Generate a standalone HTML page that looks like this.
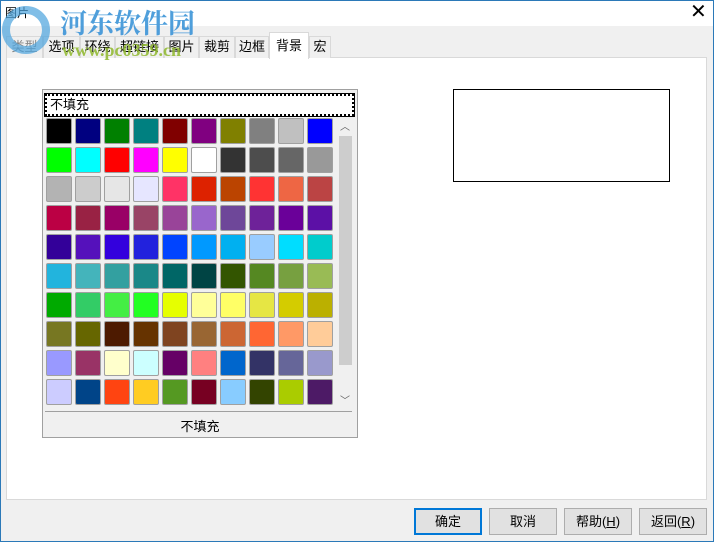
<!DOCTYPE html>
<html><head><meta charset="utf-8"><style>
*{margin:0;padding:0;box-sizing:border-box}
body{width:714px;height:542px;background:#f0f0f0;font-family:"Liberation Sans","Noto Sans CJK SC",sans-serif;font-size:12px;color:#000;position:relative;overflow:hidden}
.abs{position:absolute}
.title{left:0;top:0;width:714px;height:26px;background:#fff}
.tab{position:absolute;top:36px;height:22px;border:1px solid #d9d9d9;border-bottom:none;background:#f0f0f0;font-size:13px;line-height:20px;text-align:center}
.panel{left:6px;top:57px;width:701px;height:443px;background:#fff;border:1px solid #d9d9d9}
.sw{position:absolute;width:26px;height:26px;border:1px solid #a0a0a0;border-radius:2px}
.btn{position:absolute;top:508px;height:27px;width:68px;background:#e1e1e1;border:1px solid #adadad;font-size:13px;line-height:25px;text-align:center}
</style></head><body>
<div class="abs title"></div>
<div class="abs" style="left:5px;top:4px;font-size:12px">图片</div>
<div class="abs" style="left:690px;top:0;font-size:20px;line-height:24px">✕</div>

<div class="abs panel"></div>
<div class="tab" style="left:6px;width:37px;color:#888">类型</div>
<div class="tab" style="left:43px;width:37px">选项</div>
<div class="tab" style="left:80px;width:35px">环绕</div>
<div class="tab" style="left:115px;width:49px">超链接</div>
<div class="tab" style="left:164px;width:35px">图片</div>
<div class="tab" style="left:199px;width:36px">裁剪</div>
<div class="tab" style="left:235px;width:34px">边框</div>
<div class="tab" style="left:269px;width:40px;top:32px;height:27px;background:#fff;line-height:26px">背景</div>
<div class="tab" style="left:309px;width:22px">宏</div>
<!-- watermark -->
<div class="abs" style="left:2px;top:6px;width:48px;height:48px;border-radius:50%;border:8px solid #4aa3dd;opacity:.7"></div>
<div class="abs" style="left:60px;top:6px;font-size:27px;font-weight:bold;color:#3d95d8;font-family:'Noto Serif CJK SC',serif;line-height:32px;opacity:.9">河东软件园</div>
<div class="abs" style="left:62px;top:40px;font-size:18px;font-weight:bold;color:#8fb82c;font-family:'Liberation Serif',serif;opacity:.85">www.pc0359.cn</div>

<div class="abs" style="left:42px;top:89px;width:316px;height:349px;background:#f0f0f0;border:1px solid #a0a0a0"></div>
<div class="abs" style="left:45px;top:94px;width:309px;height:22px;background:#fff;border:2px dotted #000;outline:1px solid #000;font-size:13px;line-height:18px;padding-left:3px">不填充</div>
<div class="abs" style="left:337px;top:118px;width:16px;height:288px;background:#f0f0f0"></div>
<div class="abs" style="left:339px;top:136px;width:13px;height:229px;background:#cdcdcd"></div>
<div class="abs" style="left:340px;top:118px;font-size:10px;color:#606060">︿</div>
<div class="abs" style="left:340px;top:392px;font-size:10px;color:#606060">﹀</div>
<div class="abs" style="left:45px;top:411px;width:307px;height:1px;background:#a0a0a0"></div>
<div class="abs" style="left:42px;top:416px;width:316px;text-align:center;font-size:13px">不填充</div>
<div id="g"></div>

<div class="abs" style="left:453px;top:89px;width:217px;height:93px;border:1px solid #000;background:#fff"></div>

<div class="btn" style="left:414px;border:2px solid #0078d7;line-height:23px">确定</div>
<div class="btn" style="left:489px">取消</div>
<div class="btn" style="left:564px">帮助(<u>H</u>)</div>
<div class="btn" style="left:639px">返回(<u>R</u>)</div>
<div class="abs" style="left:0;top:0;width:714px;height:542px;border:1px solid #2b79b8;pointer-events:none"></div>
<script>
var c="000000,000080,008000,008080,800000,800080,808000,808080,c0c0c0,0000ff,00ff00,00ffff,ff0000,ff00ff,ffff00,ffffff,333333,4d4d4d,666666,999999,b3b3b3,cccccc,e6e6e6,e6e6ff,ff3366,dd2200,bb4400,ff3333,ee6644,bb4444,bb0044,992244,990066,994466,994499,9966cc,6e4799,6e2299,6a0099,5c10a6,330099,5511bb,3300dd,2222dd,0044ff,0099ff,00b0f0,99ccff,00ddff,00cccc,22b4dd,44b4bb,33a0a0,1a8888,006666,004444,335500,558822,77a040,99bb55,00aa00,33cc66,44ee44,22ff22,e6ff00,ffff99,ffff66,e6e644,d4cc00,bbb000,777722,666600,4d1a00,663300,7f4420,996633,cc6633,ff6633,ff9966,ffcc99,9999ff,993366,ffffcc,ccffff,660066,ff8080,0066cc,333366,666699,9999cc,ccccff,004488,ff4411,ffcc22,559922,770022,88ccff,334400,aacc00,4d1a66".split(","),h="";
for(var i=0;i<100;i++){h+='<div class="sw" style="left:'+(46+(i%10)*29)+'px;top:'+(118+Math.floor(i/10)*29)+'px;background:#'+c[i]+'"></div>'}
document.getElementById("g").innerHTML=h;
</script>
</body></html>
